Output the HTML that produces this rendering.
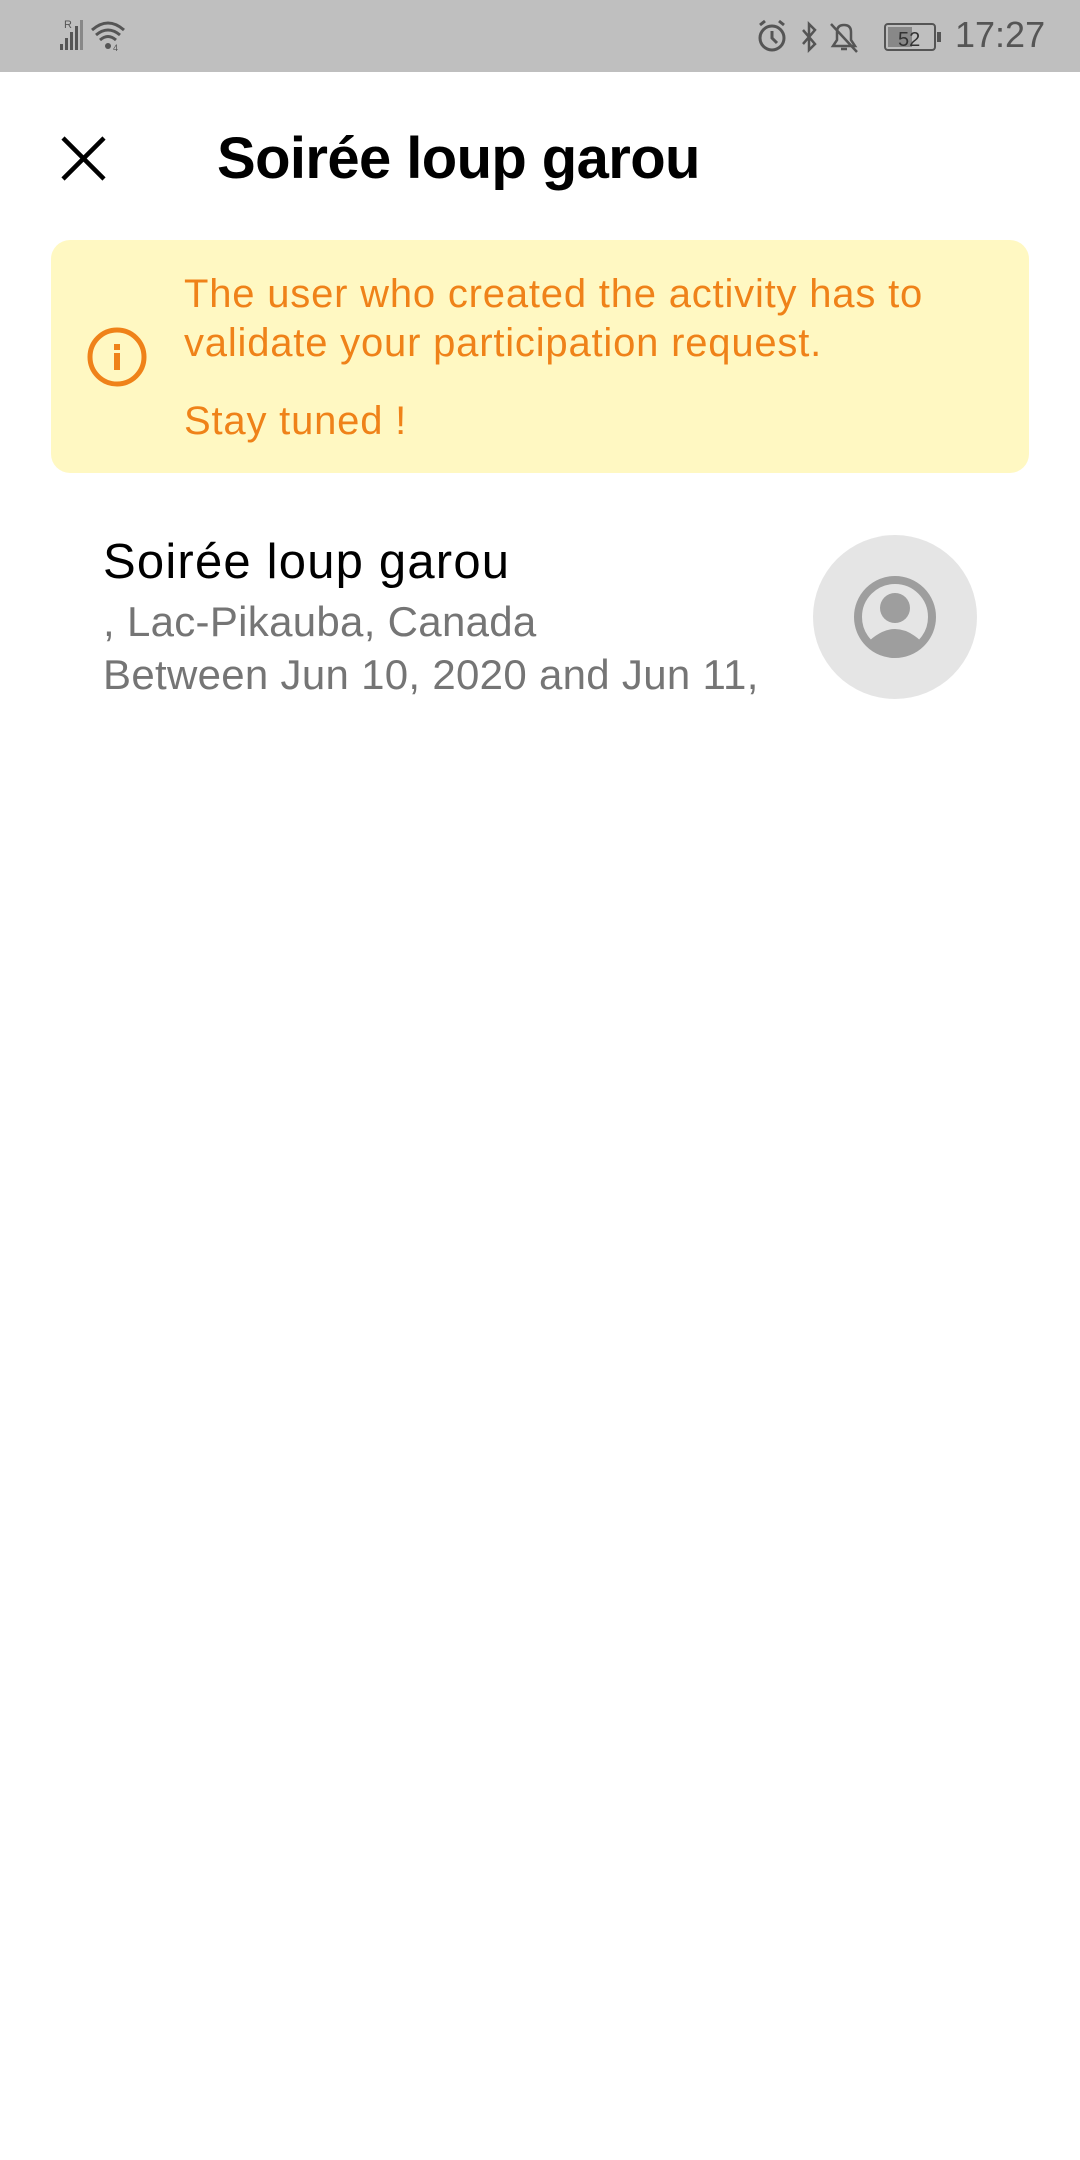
<!DOCTYPE html>
<html><head><meta charset="utf-8"><style>
body{margin:0;width:1080px;height:2160px;background:#fff;font-family:"Liberation Sans",Roboto,sans-serif;position:relative;overflow:hidden}
.abs{position:absolute;white-space:nowrap}
</style></head><body>
<div class="abs" style="left:0;top:0;width:1080px;height:72px;background:#bfbfbf"></div>
<svg class="abs" style="left:56px;top:16px" width="100" height="40" viewBox="0 0 100 40">
<text x="8" y="12" font-size="11" font-family="Liberation Sans" fill="#555">R</text>
<rect x="4" y="28" width="3" height="6" fill="#555"/><rect x="9" y="22" width="3" height="12" fill="#555"/><rect x="14" y="16" width="3" height="18" fill="#555"/><rect x="19" y="10" width="3" height="24" fill="#555"/><rect x="24" y="4" width="3" height="30" fill="#888"/>
<path d="M36 14 Q52 0 68 14 M40 19 Q52 9 64 19 M44 24 Q52 17 60 24" stroke="#555" stroke-width="3" fill="none"/>
<circle cx="52" cy="30" r="3" fill="#555"/><text x="57" y="35" font-size="9" fill="#555">4</text>
</svg>
<svg class="abs" style="left:755px;top:18px" width="190" height="40" viewBox="0 0 190 40">
<circle cx="17" cy="20" r="12" stroke="#555" stroke-width="3" fill="none"/><path d="M17 13 V20 L22 25 M5 7 L10 3 M29 7 L24 3" stroke="#555" stroke-width="3" fill="none"/>
<path d="M48 12 L60 26 L54 32 V6 L60 12 L48 26" stroke="#555" stroke-width="2.5" fill="none"/>
<path d="M78 28 H100 L96 22 V14 Q96 7 89 7 Q82 7 82 14 V22 Z M86 31 H92 M76 6 L102 34" stroke="#555" stroke-width="2.5" fill="none"/>
<rect x="130" y="6" width="50" height="26" rx="3" stroke="#555" stroke-width="2" fill="none"/><rect x="133" y="9" width="24" height="20" fill="#888"/><rect x="182" y="14" width="4" height="10" fill="#555"/>
<text x="143" y="28" font-size="20" fill="#333" font-family="Liberation Sans">52</text>
</svg>
<div class="abs" style="left:955px;top:14px;font-size:36px;color:#555">17:27</div>
<svg class="abs" style="left:61px;top:136px" width="45" height="45" viewBox="0 0 45 45"><path d="M2 2 L43 43 M43 2 L2 43" stroke="#000" stroke-width="4.5"/></svg>
<div class="abs" style="left:217px;top:124px;font-size:58px;font-weight:bold;line-height:70px;letter-spacing:-0.6px;color:#000">Soirée loup garou</div>
<div class="abs" style="left:51px;top:240px;width:978px;height:233px;background:#fff8c2;border-radius:19px"></div>
<svg class="abs" style="left:86px;top:326px" width="62" height="62" viewBox="0 0 62 62"><circle cx="31" cy="31" r="27" stroke="#ef8219" stroke-width="5" fill="none"/><rect x="28" y="27" width="6" height="17" fill="#ef8219"/><rect x="28" y="18" width="6" height="6" fill="#ef8219"/></svg>
<div class="abs" style="left:184px;top:270px;font-size:40px;line-height:49px;color:#ef8219;letter-spacing:0.8px">The user who created the activity has to<br>validate your participation request.</div>
<div class="abs" style="left:184px;top:397px;font-size:40px;line-height:49px;color:#ef8219;letter-spacing:0.8px">Stay tuned !</div>
<div class="abs" style="left:103px;top:533px;font-size:49px;line-height:58px;color:#000;letter-spacing:1.2px">Soirée loup garou</div>
<div class="abs" style="left:103px;top:595px;font-size:42px;line-height:53px;color:#757575;letter-spacing:0.3px">, Lac-Pikauba, Canada<br>Between Jun 10, 2020 and Jun 11,</div>
<div class="abs" style="left:813px;top:535px;width:164px;height:164px;border-radius:50%;background:#e5e5e5"></div>
<svg class="abs" style="left:854px;top:576px" width="82" height="82" viewBox="0 0 82 82"><circle cx="41" cy="41" r="37" stroke="#9e9e9e" stroke-width="8" fill="#e5e5e5"/><circle cx="41" cy="32" r="15" fill="#9e9e9e"/><path d="M14 66 Q41 40 68 66 Q41 86 14 66Z" fill="#9e9e9e"/></svg>
</body></html>
